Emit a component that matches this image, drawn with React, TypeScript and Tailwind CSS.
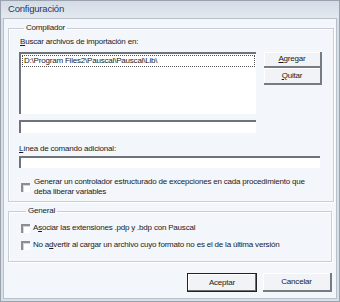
import type { ReactNode } from "react";

function GroupBox({
  title,
  className,
  children,
}: {
  title: string;
  className?: string;
  children: ReactNode;
}) {
  return (
    <fieldset
      className={`border border-[#c9ced6] shadow-[inset_1px_1px_0_#ffffff,1px_1px_0_#ffffff] ${className ?? ""}`}
    >
      <legend className="ml-[5px] px-[2px] leading-[10px] text-[#1b1b1b]">{title}</legend>
      {children}
    </fieldset>
  );
}

function CheckBox() {
  return (
    <span className="block h-[9px] w-[9px] shrink-0 border-l-2 border-t-2 border-l-[#8a8f96] border-t-[#8a8f96] bg-white shadow-[inset_1px_1px_0_#d4d7db]" />
  );
}

function Sunken({ className }: { className?: string }) {
  return (
    <div
      className={`border-l-2 border-t-2 border-l-[#6f747b] border-t-[#6f747b] bg-white ${className ?? ""}`}
    />
  );
}

function Button({
  children,
  isDefault,
  className,
}: {
  children: ReactNode;
  isDefault?: boolean;
  className?: string;
}) {
  return (
    <button
      type="button"
      className={`flex items-center justify-center bg-[#f1f3f6] leading-[10px] text-[#1b1b1b] ${
        isDefault
          ? "border border-[#222] shadow-[inset_-1px_-1px_0_#6e6e6e,inset_1px_1px_0_#ffffff]"
          : "border-b-2 border-r-2 border-b-[#777c82] border-r-[#777c82] shadow-[inset_1px_1px_0_#ffffff]"
      } ${className ?? ""}`}
    >
      {children}
    </button>
  );
}

export default function App() {
  return (
    <div
      className="flex h-[302px] w-[340px] flex-col border border-[#9aa3ad] bg-[#d8dfe7] text-[8px] tracking-[-0.2px]"
      style={{ fontFamily: "'Liberation Sans', Arial, sans-serif" }}
    >
      <div className="flex h-[17px] shrink-0 items-center bg-gradient-to-b from-[#d3dbe5] to-[#e4e9ef] pl-[7px] text-[9.5px] tracking-[-0.2px] text-[#1d3a66]">
        Configuración
      </div>
      <div className="mx-[2px] mb-[2px] flex flex-1 flex-col border border-[#b7bfc9] bg-[#f3f6fa] px-[4px] pt-[4px]">
        <GroupBox title="Compilador" className="pb-[4px] pl-[10px] pr-[11px]">
          <div className="ml-[1px] mt-[4px] leading-[10px] text-[#1b1b1b]">
            <u>B</u>uscar archivos de importación en:
          </div>
          <div className="mt-[5px] flex">
            <div className="relative h-[62px] w-[237px] border-l-2 border-t-2 border-l-[#6f747b] border-t-[#6f747b] bg-white">
              <div className="mx-[1px] mt-[1px] border border-dotted border-[#555] pl-[1px] leading-[10px] text-[#1b1b1b]">
                D:\Program Files2\Pauscal\Pauscal\Lib\
              </div>
            </div>
            <div className="ml-[8px] flex w-[58px] flex-col">
              <Button className="h-[16px]">
                <span>
                  <u>A</u>gregar
                </span>
              </Button>
              <Button className="h-[17px]">
                <span>
                  <u>Q</u>uitar
                </span>
              </Button>
            </div>
          </div>
          <Sunken className="mt-[6px] h-[13px] w-[237px]" />
          <div className="mt-[11px] leading-[10px] text-[#1b1b1b]">
            <u>L</u>ínea de comando adicional:
          </div>
          <Sunken className="mt-[2px] h-[12px] w-[301px]" />
          <div className="mt-[9px] flex items-center gap-[4px] pl-[2px]">
            <CheckBox />
            <div className="whitespace-nowrap leading-[10px] text-[#1b1b1b]">
              Generar un controlador estructurado de excepciones en cada procedimiento que
              <br />
              deba liberar variables
            </div>
          </div>
        </GroupBox>
        <GroupBox title="General" className="mt-[4px] pb-[11px] pl-[12px] pr-[11px]">
          <div className="mt-[7px] flex items-center gap-[3px] leading-[10px] text-[#1b1b1b]">
            <CheckBox />
            <span>
              A<u>s</u>ociar las extensiones .pdp y .bdp con Pauscal
            </span>
          </div>
          <div className="mt-[7px] flex items-center gap-[3px] leading-[10px] text-[#1b1b1b]">
            <CheckBox />
            <span>
              No a<u>d</u>vertir al cargar un archivo cuyo formato no es el de la última versión
            </span>
          </div>
        </GroupBox>
        <div className="mt-[11px] flex justify-end gap-[6px]">
          <Button isDefault className="h-[19px] w-[70px]">
            Aceptar
          </Button>
          <Button className="h-[19px] w-[69px]">Cancelar</Button>
        </div>
      </div>
    </div>
  );
}
